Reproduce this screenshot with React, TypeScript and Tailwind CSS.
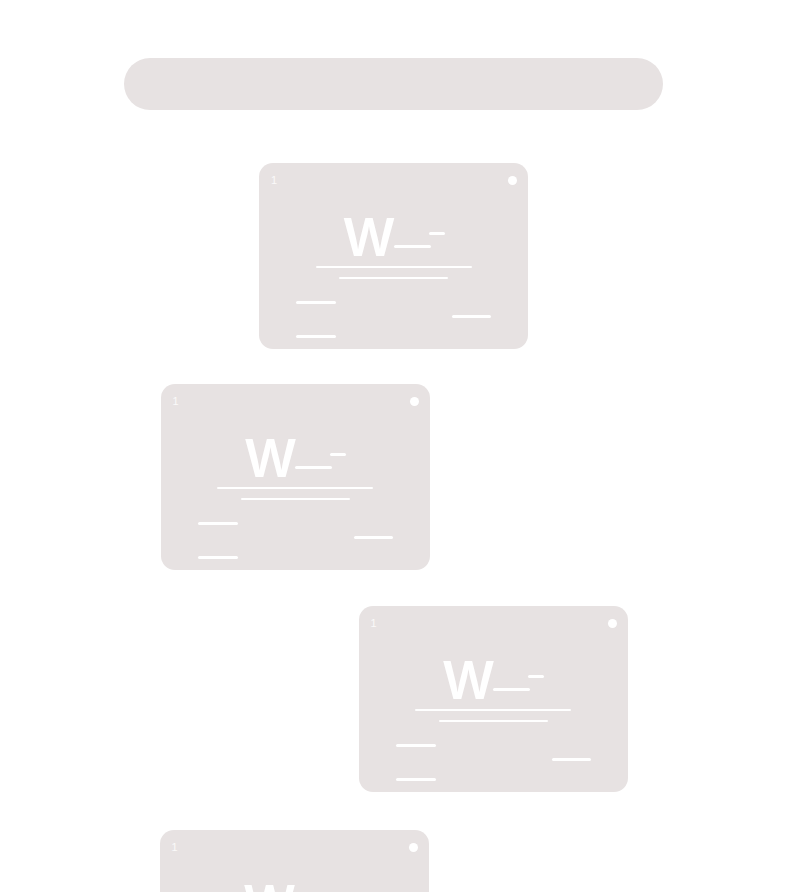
const cards = [
  { id: 1, shift: 'ml-0', mt: 'mt-[53px]' },
  { id: 2, shift: 'mr-[197px]', mt: 'mt-[35px]' },
  { id: 3, shift: 'ml-[199px]', mt: 'mt-[36px]' },
  { id: 4, shift: 'mr-[199px]', mt: 'mt-[38px]' },
];

function Card({ n }: { n: number }) {
  return (
    <div className="w-[269px] h-[186px] shrink-0 rounded-[14px] bg-[#e7e2e2] flex flex-col pt-[13px] pl-[12px] pr-[11px] overflow-hidden">
      {/* Header */}
      <div className="flex items-center justify-between h-[9px]">
        <span className="text-[11px] leading-none text-white/80">{n > 0 ? '1' : ''}</span>
        <div className="w-[9px] h-[9px] rounded-full bg-white" />
      </div>

      {/* Big letter with dashes */}
      <div className="mt-[27px] flex justify-center">
        <div className="flex items-start h-[51px]">
          <span className="text-[52px] leading-none font-semibold text-white" style={{ fontFamily: 'Inter, "Liberation Sans", sans-serif' }}>W</span>
          <div className="flex flex-col w-[52px] -ml-[2px]">
            <div className="ml-[35px] mt-[20px] w-[16px] h-[3px] rounded-full bg-white" />
            <div className="mt-[10px] w-[37px] h-[3px] rounded-full bg-white" />
          </div>
        </div>
      </div>

      {/* Underlines */}
      <div className="flex flex-col items-center pr-[1px]">
        <div className="mt-[3px] w-[156px] h-[2px] rounded-full bg-white" />
        <div className="mt-[9px] w-[109px] h-[2px] rounded-full bg-white" />
      </div>

      {/* Bottom rows */}
      <div className="mt-[22px] flex justify-between pl-[25px] pr-[26px]">
        <div className="flex flex-col">
          <div className="w-[40px] h-[3px] rounded-full bg-white" />
          <div className="mt-[31px] w-[40px] h-[3px] rounded-full bg-white" />
        </div>
        <div className="mt-[14px] w-[39px] h-[3px] rounded-full bg-white" />
      </div>
    </div>
  );
}

export default function App() {
  return (
    <div className="min-h-screen bg-white flex flex-col items-center pt-[58px] pl-[1px]" style={{ fontFamily: '"Liberation Sans", Arial, sans-serif' }}>
      <div className="w-[539px] h-[52px] rounded-full bg-[#e7e2e2]" />
      {cards.map((c) => (
        <div key={c.id} className={`${c.mt} ${c.shift}`}>
          <Card n={c.id} />
        </div>
      ))}
    </div>
  );
}
